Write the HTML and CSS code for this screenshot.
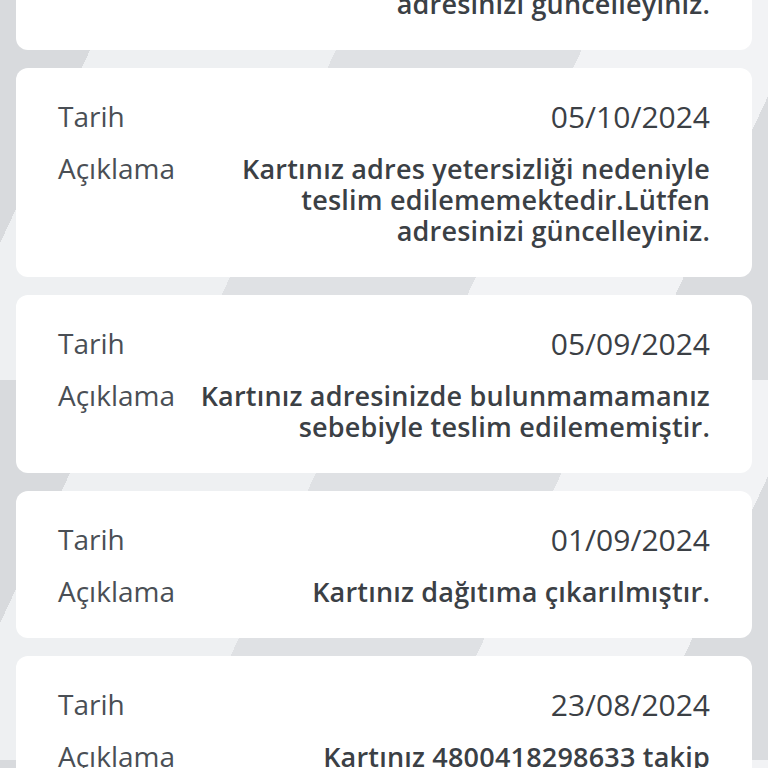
FILE: index.html
```html
<!DOCTYPE html>
<html lang="tr">
<head>
<meta charset="utf-8">
<title>Kart Takip</title>
<link rel="stylesheet" href="styles.css">
</head>
<body>
<main class="list">
  <section class="card">
    <div class="row"><span class="label">Tarih</span><span class="date">10/10/2024</span></div>
    <div class="row"><span class="label">Açıklama</span><span class="desc">Kartınız adres yetersizliği nedeniyle teslim edilememektedir.Lütfen adresinizi güncelleyiniz.</span></div>
  </section>
  <section class="card">
    <div class="row"><span class="label">Tarih</span><span class="date">05/10/2024</span></div>
    <div class="row"><span class="label">Açıklama</span><span class="desc">Kartınız adres yetersizliği nedeniyle teslim edilememektedir.Lütfen adresinizi güncelleyiniz.</span></div>
  </section>
  <section class="card">
    <div class="row"><span class="label">Tarih</span><span class="date">05/09/2024</span></div>
    <div class="row"><span class="label">Açıklama</span><span class="desc">Kartınız adresinizde bulunmamamanız sebebiyle teslim edilememiştir.</span></div>
  </section>
  <section class="card">
    <div class="row"><span class="label">Tarih</span><span class="date">01/09/2024</span></div>
    <div class="row"><span class="label">Açıklama</span><span class="desc">Kartınız dağıtıma çıkarılmıştır.</span></div>
  </section>
  <section class="card">
    <div class="row"><span class="label">Tarih</span><span class="date">23/08/2024</span></div>
    <div class="row"><span class="label">Açıklama</span><span class="desc">Kartınız 4800418298633 takip numarası ile kargoya verilmiştir.</span></div>
  </section>
</main>
</body>
</html>
```
FILE: styles.css
```css
html, body {
  margin: 0;
  padding: 0;
  height: 100%;
  overflow: hidden;
}
body {
  font-family: "Open Sans", "Noto Sans", sans-serif;
  color: #3b4045;
  background-color: #e1e3e6;
  background-image:
    linear-gradient(115deg, #d8dadd 0 12%, #eef0f2 12% 38%, #dfe1e4 38% 64%, #f2f3f5 64% 86%, #dadcdf 86% 100%);
  background-size: 100% 380px;
}
.list {
  display: flex;
  flex-direction: column;
  gap: 18px;
  padding: 0 16px;
  margin-top: -159px;
}
.card {
  background: #ffffff;
  border-radius: 12px;
  padding: 33px 42px 31px 42px;
  display: flex;
  flex-direction: column;
  gap: 21px;
}
.row {
  display: flex;
  align-items: flex-start;
  justify-content: space-between;
  gap: 16px;
  line-height: 31px;
}
.label {
  flex: 0 0 auto;
  font-size: 28px;
  font-weight: 400;
  color: #4a4f55;
}
.date {
  font-size: 30px;
  font-weight: 500;
  text-align: right;
}
.desc {
  flex: 0 1 512px;
  max-width: 512px;
  font-size: 27px;
  font-weight: 600;
  letter-spacing: 0.2px;
  text-align: right;
}
```
